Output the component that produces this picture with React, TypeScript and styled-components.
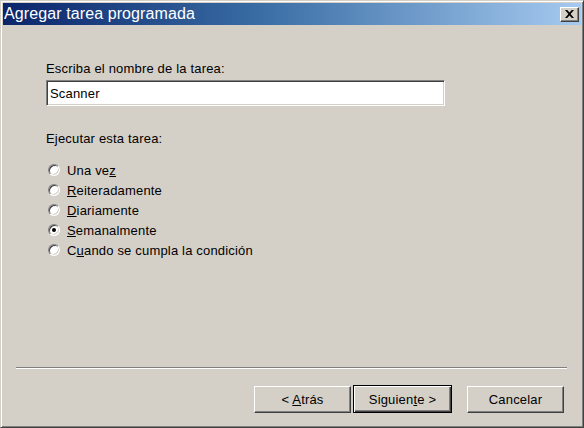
import React from "react";
import styled, { createGlobalStyle } from "styled-components";

const Global = createGlobalStyle`
  html, body { margin: 0; padding: 0; background: #d4d0c8; }
  body { font-family: "Liberation Sans", Arial, sans-serif; font-size: 13px; letter-spacing: 0.18px; color: #000; }
`;

const Window = styled.div`
  width: 584px;
  height: 428px;
  box-sizing: border-box;
  background: #d4d0c8;
  border-top: 1px solid #d4d0c8;
  border-left: 1px solid #d4d0c8;
  border-right: 1px solid #404040;
  border-bottom: 1px solid #404040;
  box-shadow: inset 1px 1px 0 #ffffff, inset -1px -1px 0 #808080;
  padding: 2px;
  display: flex;
  flex-direction: column;
`;

const TitleBar = styled.div`
  height: 22px;
  flex: none;
  background: linear-gradient(to right, #0a246a 0%, #3a6ea5 45%, #a6caf0 100%);
  display: flex;
  align-items: center;
  justify-content: space-between;
  padding: 0 2px 0 1px;
`;

const TitleText = styled.span`
  color: #fff;
  font-size: 16px;
  letter-spacing: 0.1px;
  line-height: 22px;
`;

const CloseBtn = styled.div`
  width: 19px;
  height: 15px;
  box-sizing: border-box;
  background: #d4d0c8;
  border-top: 1px solid #ffffff;
  border-left: 1px solid #ffffff;
  border-right: 1px solid #404040;
  border-bottom: 1px solid #404040;
  box-shadow: inset -1px -1px 0 #808080;
  display: flex;
  align-items: center;
  justify-content: center;
`;

const Client = styled.div`
  flex: 1;
  display: flex;
  flex-direction: column;
`;

const Body = styled.div`
  flex: 1;
  padding: 36px 0 0 43px;
  display: flex;
  flex-direction: column;
`;

const Label = styled.div<{ $top?: number }>`
  line-height: 15px;
  margin-top: ${(p) => p.$top ?? 0}px;
`;

const TextInput = styled.div`
  margin-top: 4px;
  width: 399px;
  height: 26px;
  box-sizing: border-box;
  background: #fff;
  border-top: 1px solid #808080;
  border-left: 1px solid #808080;
  border-right: 1px solid #ffffff;
  border-bottom: 1px solid #ffffff;
  box-shadow: inset 1px 1px 0 #404040, inset -1px -1px 0 #d4d0c8;
  padding: 0 0 0 3px;
  display: flex;
  align-items: center;
`;

const RadioList = styled.div`
  margin-top: 14px;
  display: flex;
  flex-direction: column;
`;

const RadioRow = styled.div`
  height: 20px;
  display: flex;
  align-items: center;
  gap: 7px;
  padding-left: 2px;
`;

const Circle = styled.span`
  width: 12px;
  height: 12px;
  border-radius: 50%;
  box-sizing: border-box;
  background: #fff;
  border: 1px solid;
  border-color: #808080 #ffffff #ffffff #808080;
  box-shadow: inset 1px 1px 0 #404040, inset -1px -1px 0 #d4d0c8;
  display: flex;
  align-items: center;
  justify-content: center;
  flex: none;
`;

const Dot = styled.span`
  width: 4px;
  height: 4px;
  border-radius: 50%;
  background: #000;
`;

const Footer = styled.div`
  display: flex;
  flex-direction: column;
  padding: 0 14px 12px 13px;
`;

const Separator = styled.div`
  height: 0;
  border-top: 1px solid #808080;
  border-bottom: 1px solid #ffffff;
`;

const ButtonRow = styled.div`
  margin-top: 16px;
  padding-right: 3px;
  display: flex;
  justify-content: flex-end;
  align-items: center;
`;

const Button = styled.div<{ $default?: boolean; $gap?: number }>`
  width: ${(p) => (p.$default ? 99 : 97)}px;
  height: ${(p) => (p.$default ? 28 : 27)}px;
  margin-left: ${(p) => p.$gap ?? 0}px;
  box-sizing: border-box;
  background: #d4d0c8;
  border: 1px solid;
  border-color: ${(p) => (p.$default ? "#000" : "#ffffff #404040 #404040 #ffffff")};
  box-shadow: ${(p) =>
    p.$default
      ? "inset 1px 1px 0 #fff, inset -1px -1px 0 #404040, inset -2px -2px 0 #808080"
      : "inset -1px -1px 0 #808080"};
  display: flex;
  align-items: center;
  justify-content: center;
`;

const ButtonLabel = styled.span`
  white-space: pre;
`;

const options: { pre: string; key: string; post: string; checked?: boolean }[] = [
  { pre: "Una ve", key: "z", post: "" },
  { pre: "", key: "R", post: "eiteradamente" },
  { pre: "", key: "D", post: "iariamente" },
  { pre: "", key: "S", post: "emanalmente", checked: true },
  { pre: "C", key: "u", post: "ando se cumpla la condición" },
];

export default function App() {
  return (
    <>
      <Global />
      <Window>
        <TitleBar>
          <TitleText>Agregar tarea programada</TitleText>
          <CloseBtn>
            <svg width="9" height="8" viewBox="0 0 9 8">
              <path d="M0 0h2.2l2.3 2.6L6.8 0H9L5.6 4 9 8H6.8L4.5 5.4 2.2 8H0l3.4-4z" fill="#000" />
            </svg>
          </CloseBtn>
        </TitleBar>
        <Client>
          <Body>
            <Label>Escriba el nombre de la tarea:</Label>
            <TextInput>Scanner</TextInput>
            <Label $top={25}>Ejecutar esta tarea:</Label>
            <RadioList>
              {options.map((o) => (
                <RadioRow key={o.pre + o.key}>
                  <Circle>{o.checked && <Dot />}</Circle>
                  <span>
                    {o.pre}
                    <u>{o.key}</u>
                    {o.post}
                  </span>
                </RadioRow>
              ))}
            </RadioList>
          </Body>
          <Footer>
            <Separator />
            <ButtonRow>
              <Button>
                <ButtonLabel>
                  {"< "}
                  <u>A</u>trás
                </ButtonLabel>
              </Button>
              <Button $default $gap={2}>
                <ButtonLabel>
                  Siguien<u>t</u>e{" >"}
                </ButtonLabel>
              </Button>
              <Button $gap={15}>
                <ButtonLabel>Cancelar</ButtonLabel>
              </Button>
            </ButtonRow>
          </Footer>
        </Client>
      </Window>
    </>
  );
}
